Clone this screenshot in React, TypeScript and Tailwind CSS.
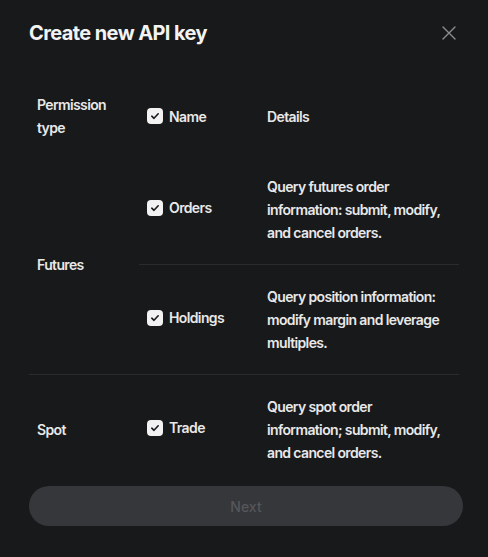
import React from 'react'

function Check() {
  return (
    <span className="flex h-4 w-4 shrink-0 items-center justify-center rounded-[4px] bg-[#f2f2f2]">
      <svg width="10" height="10" viewBox="0 0 10 10" fill="none">
        <path d="M1.8 5.2 4 7.3 8.2 2.8" stroke="#18191b" strokeWidth="1.6" strokeLinecap="round" strokeLinejoin="round" />
      </svg>
    </span>
  )
}

function Perm({ label, border, lift }: { label: string; border?: boolean; lift?: boolean }) {
  return (
    <div className={`flex items-center gap-[6px] px-2 ${lift ? 'pb-1' : ''} ${border ? 'border-b border-[#2a2b2e]' : ''}`}>
      <Check />
      <span>{label}</span>
    </div>
  )
}

// lines are broken by hand so wrapping matches the design
function Detail({ lines, border }: { lines: string[]; border?: boolean }) {
  return (
    <div className={`flex items-center px-2 py-5 ${border ? 'border-b border-[#2a2b2e]' : ''}`}>
      <p className="whitespace-nowrap">
        {lines.map((l, i) => (
          <React.Fragment key={i}>
            {i > 0 && <br />}
            {l}
          </React.Fragment>
        ))}
      </p>
    </div>
  )
}

export default function App() {
  return (
    <div
      className="flex min-h-[557px] w-full flex-col bg-[#18191b] pl-[29px] pr-[25px] pt-[19px] pb-[30px] text-[#e8e8e8]"
      style={{ fontFamily: 'Inter, "Noto Sans", sans-serif' }}
    >
      <div className="flex items-center justify-between">
        <h2 className="text-[20px] leading-7 font-bold tracking-[-0.03em] text-[#f3f3f3]">Create new API key</h2>
        <svg className="mr-[6px]" width="16" height="16" viewBox="0 0 16 16" fill="none">
          <path d="M2 2l12 12M14 2 2 14" stroke="#8c8d90" strokeWidth="1.4" strokeLinecap="round" />
        </svg>
      </div>

      <div className="mr-[4px] mt-[30px] grid grid-cols-[110px_120px_1fr] text-[14px] leading-[23px] font-semibold tracking-[-0.045em]">
        {/* header */}
        <div className="px-2 py-4">Permission<br />type</div>
        <Perm label="Name" />
        <div className="flex items-center px-2">Details</div>

        {/* futures */}
        <div className="row-span-2 flex items-center border-b border-[#2a2b2e] px-2">Futures</div>
        <Perm label="Orders" border lift />
        <Detail lines={['Query futures order', 'information: submit, modify,', 'and cancel orders.']} border />
        <Perm label="Holdings" border lift />
        <Detail lines={['Query position information:', 'modify margin and leverage', 'multiples.']} border />

        {/* spot */}
        <div className="flex items-center px-2">Spot</div>
        <Perm label="Trade" lift />
        <Detail lines={['Query spot order', 'information; submit, modify,', 'and cancel orders.']} />
      </div>

      <button className="mt-[2px] h-10 w-full rounded-full bg-[#36373a] text-[14px] font-medium text-[#55565a]">
        Next
      </button>
    </div>
  )
}
